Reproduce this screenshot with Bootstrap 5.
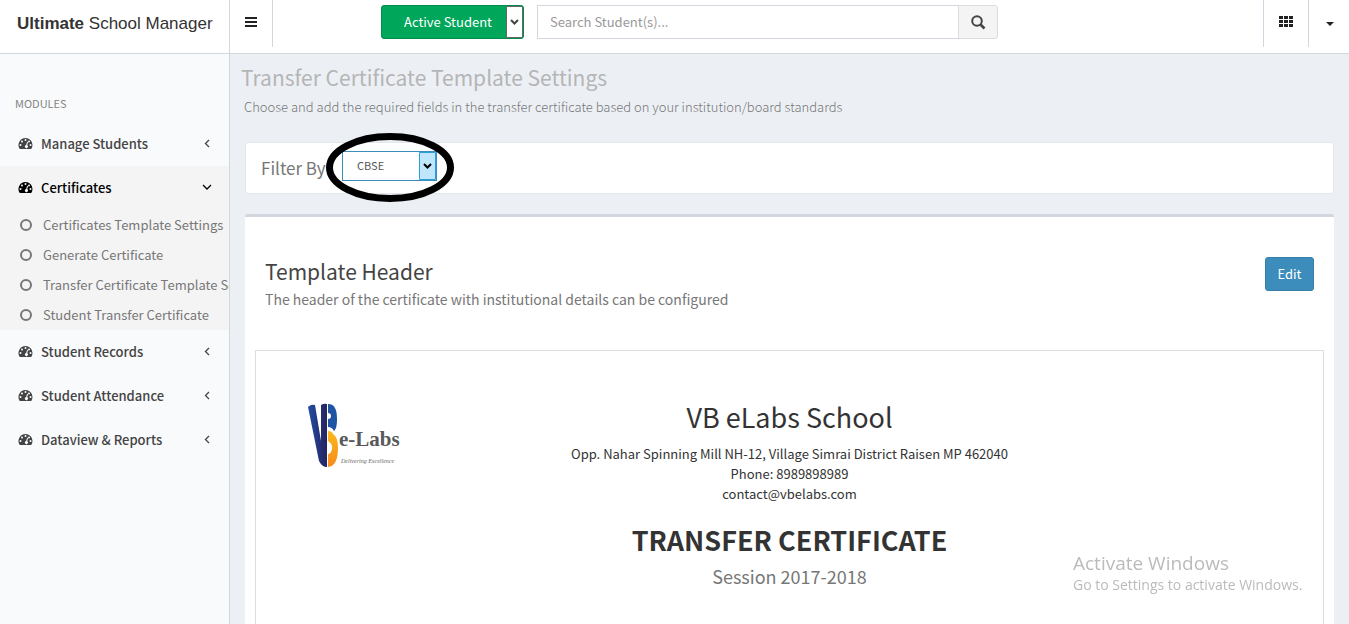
<!DOCTYPE html>
<html lang="en">
<head>
<meta charset="utf-8">
<meta name="viewport" content="width=device-width, initial-scale=1">
<title>Ultimate School Manager</title>
<link rel="stylesheet" href="https://cdn.jsdelivr.net/npm/bootstrap@5.3.0/dist/css/bootstrap.min.css">
<style>
  body { font-family: "Noto Sans CJK SC", sans-serif; font-size: 13px; line-height: 20px; color: #333; background: #ecf0f5; }
  a { text-decoration: none; color: inherit; }
  .topbar { height: 54px; border-bottom: 1px solid #d2d6de; background: #fff; }
  .brand { width: 230px; height: 53px; line-height: 48px; font-family: "Liberation Sans", sans-serif; font-size: 17px; color: #333; border-right: 1px solid #d2d6de; padding-left: 17px; white-space: nowrap; }
  .bar-btn { height: 47px; border: 0; background: none; padding: 0 0 6px; color: #333; }
  .bar-menu { width: 43px; border-right: 1px solid #d2d6de; }
  .bar-grid { width: 46px; border-left: 1px solid #d2d6de; border-right: 1px solid #d2d6de; }
  .bar-user { width: 40px; padding: 0 0 2px 2px; }
  .finder { margin-left: 108px; padding-top: 5px; gap: 13px; }
  .finder select { width: 143px; height: 34px; appearance: none; border: 1px solid #008d4c; border-radius: 3px; color: #fff; padding: 0 22px;
    background: #00a65a url("data:image/svg+xml,%3Csvg xmlns='http://www.w3.org/2000/svg' width='17' height='32'%3E%3Cpath d='M.5.5h16v31H.5z' fill='%23fff' stroke='%23666'/%3E%3Cpath d='M5 14l3.500 3.500L12 14' fill='none' stroke='%23444' stroke-width='2'/%3E%3C/svg%3E") right center no-repeat; }
  .finder .input-group { width: 461px; }
  .finder .form-control { height: 34px; font-size: 13px; line-height: 20px; border-color: #d2d6de; border-radius: 0; padding: 5px 12px 7px; }
  .finder .form-control::placeholder { color: #999; }
  .finder .btn { width: 40px; height: 34px; padding: 0 0 4px; background: #f4f4f4; border-color: #ddd; border-radius: 0 3px 3px 0; }
  .sidebar { width: 230px; flex: none; background: #f9fafc; border-right: 1px solid #d2d6de; overflow: hidden; min-height: calc(100vh - 54px); }
  .side-title { padding: 39px 15px 9px; font-size: 11px; color: #848484; }
  .side-link { height: 44px; padding: 0 17px 0 18px; color: #444; font-weight: 500; }
  .side-link .arrow { margin-left: auto; }
  .side-open { background: #f4f4f5; }
  .side-open > .side-link { color: #000; }
  .sub-link { height: 30px; padding-left: 20px; gap: 11px; color: #777; white-space: nowrap; }
  .page-body { min-width: 0; padding: 10px 15px 0; }
  .page-title { font-size: 21px; line-height: 26px; color: #b5b5b5; margin: 0 0 7px -4px; font-weight: 400; }
  .page-lead { color: #777; font-weight: 300; margin: 0 0 25px -1px; }
  .filter-box { height: 52px; background: #fff; border: 1px solid #e3e6ea; border-radius: 3px; padding: 0 15px; margin-bottom: 20px; }
  .filter-box label { font-size: 17px; color: #777; width: 81px; white-space: nowrap; }
  .board-select { width: 95px; height: 30px; appearance: none; border: 1px solid #3c8dbc; border-radius: 0; font-size: 11px; color: #555; padding: 0 14px 2px; display: block;
    background: #fff url("data:image/svg+xml,%3Csvg xmlns='http://www.w3.org/2000/svg' width='17' height='28'%3E%3Cpath d='M.5.5h16v27H.5z' fill='%23bee6fd' stroke='%232a9fd8'/%3E%3Cpath d='M5 12l3.500 3.500L12 12' fill='none' stroke='%23000' stroke-width='2'/%3E%3C/svg%3E") right center no-repeat; }
  .pick { margin-bottom: 5px; }
  .ring { position: absolute; left: -16px; top: -18px; pointer-events: none; }
  .panel { background: #fff; border-top: 3px solid #d2d6de; border-radius: 3px; padding: 40px 10px 0; }
  .panel-head { padding: 0 10px; margin-bottom: 37px; }
  .panel-title { font-size: 21px; line-height: 28px; color: #444; font-weight: 400; margin: 0; }
  .panel-text { font-size: 14px; line-height: 28px; color: #777; margin: 0; }
  .edit-btn { height: 34px; width: 49px; padding: 0; font-size: 13px; border: 1px solid #367fa9; border-radius: 3px; background: #3c8dbc; color: #fff; }
  .edit-btn:hover { background: #367fa9; color: #fff; }
  .cert { border: 1px solid #ddd; padding: 49px 15px 0; min-height: 300px; }
  .cert .row { --bs-gutter-x: 30px; }
  .logo-cell { padding: 3px 0 0 52px; }
  .school { font-size: 27px; line-height: 34px; font-weight: 400; margin: 0 0 10px; }
  .cert-title { font-size: 27px; line-height: 34px; font-weight: 700; margin: 19px 0 6px; }
  .session { font-size: 18px; line-height: 26px; color: #777; }
  .os-note { position: fixed; right: 40px; bottom: 28px; width: 236px; font-family: "Open Sans", sans-serif; color: #bbb; font-size: 14px; line-height: 22px; white-space: nowrap; pointer-events: none; }
  .os-note strong { display: block; font-size: 19px; font-weight: 400; }
</style>
</head>
<body>
<svg width="0" height="0" class="position-absolute" aria-hidden="true">
  <symbol id="gauge" viewBox="0 0 14 12"><path fill="currentColor" fill-rule="evenodd" d="M7 0a7 7 0 0 1 7 7c0 1.500-.4 2.700-1.100 3.800-.1.100-.3.200-.4.200h-11c-.1 0-.3-.1-.4-.2A7 7 0 0 1 7 0zM3 7a1 1 0 1 0-2 0 1 1 0 0 0 2 0zm1.500-3.500a1 1 0 1 0-2 0 1 1 0 0 0 2 0zM8 2a1 1 0 1 0-2 0 1 1 0 0 0 2 0zm.700 5.300.8-3c.1-.7-.8-.9-1-.2l-.8 3a1.500 1.500 0 1 0 1 .2zM11.500 3.500a1 1 0 1 0-2 0 1 1 0 0 0 2 0zM13 7a1 1 0 1 0-2 0 1 1 0 0 0 2 0z"/></symbol>
  <symbol id="left" viewBox="0 0 10 10"><path d="M7 1 3.500 4.500 7 8" fill="none" stroke="currentColor" stroke-width="1.300"/></symbol>
  <symbol id="down" viewBox="0 0 10 10"><path d="M1 2l4 4 4-4" fill="none" stroke="currentColor" stroke-width="1.300"/></symbol>
  <symbol id="ringlet" viewBox="0 0 12 12"><circle cx="6" cy="6" r="5" fill="none" stroke="currentColor" stroke-width="2"/></symbol>
</svg>

<header class="topbar d-flex align-items-start">
  <a class="brand" href="#"><b>Ultimate</b> School Manager</a>
  <button class="bar-btn bar-menu" type="button" aria-label="Toggle menu">
    <svg width="12" height="10" viewBox="0 0 12 10"><path d="M0 1h12M0 5h12M0 9h12" stroke="#222" stroke-width="2"/></svg>
  </button>
  <form class="finder d-flex">
    <select aria-label="Student status"><option>Active Student</option></select>
    <div class="input-group">
      <input class="form-control" type="text" placeholder="Search Student(s)..." aria-label="Search students">
      <button class="btn" type="button" aria-label="Search">
        <svg width="15" height="15" viewBox="0 0 15 15" fill="none" stroke="#444"><circle cx="6" cy="6" r="4.800" stroke-width="2"/><path d="M9.500 9.500 13.500 13.500" stroke-width="2.600"/></svg>
      </button>
    </div>
  </form>
  <button class="bar-btn bar-grid ms-auto" type="button" aria-label="Apps">
    <svg width="14" height="11" viewBox="0 0 14 11" fill="#222"><path d="M0 0h4v3H0zM5 0h4v3H5zM10 0h4v3h-4zM0 4h4v3H0zM5 4h4v3H5zM10 4h4v3h-4zM0 8h4v3H0zM5 8h4v3H5zM10 8h4v3h-4z"/></svg>
  </button>
  <button class="bar-btn bar-user" type="button" aria-label="Account menu">
    <svg width="8" height="4" viewBox="0 0 8 4"><path d="M0 0h8L4 4z" fill="#222"/></svg>
  </button>
</header>

<div class="d-flex">
  <nav class="sidebar" aria-label="Modules">
    <div class="side-title">MODULES</div>
    <a class="side-link d-flex align-items-center gap-2" href="#"><svg width="15" height="12"><use href="#gauge"/></svg>Manage Students<svg class="arrow" width="10" height="10"><use href="#left"/></svg></a>
    <div class="side-open">
      <a class="side-link d-flex align-items-center gap-2" href="#"><svg width="15" height="12"><use href="#gauge"/></svg>Certificates<svg class="arrow" width="10" height="10"><use href="#down"/></svg></a>
      <a class="sub-link d-flex align-items-center" href="#"><svg class="flex-shrink-0" width="12" height="12"><use href="#ringlet"/></svg>Certificates Template Settings</a>
      <a class="sub-link d-flex align-items-center" href="#"><svg class="flex-shrink-0" width="12" height="12"><use href="#ringlet"/></svg>Generate Certificate</a>
      <a class="sub-link d-flex align-items-center" href="#"><svg class="flex-shrink-0" width="12" height="12"><use href="#ringlet"/></svg>Transfer Certificate Template Settings</a>
      <a class="sub-link d-flex align-items-center" href="#"><svg class="flex-shrink-0" width="12" height="12"><use href="#ringlet"/></svg>Student Transfer Certificate</a>
    </div>
    <a class="side-link d-flex align-items-center gap-2" href="#"><svg width="15" height="12"><use href="#gauge"/></svg>Student Records<svg class="arrow" width="10" height="10"><use href="#left"/></svg></a>
    <a class="side-link d-flex align-items-center gap-2" href="#"><svg width="15" height="12"><use href="#gauge"/></svg>Student Attendance<svg class="arrow" width="10" height="10"><use href="#left"/></svg></a>
    <a class="side-link d-flex align-items-center gap-2" href="#"><svg width="15" height="12"><use href="#gauge"/></svg>Dataview &amp; Reports<svg class="arrow" width="10" height="10"><use href="#left"/></svg></a>
  </nav>

  <main class="page-body flex-grow-1">
    <h1 class="page-title">Transfer Certificate Template Settings</h1>
    <p class="page-lead">Choose and add the required fields in the transfer certificate based on your institution/board standards</p>

    <div class="filter-box d-flex align-items-center">
      <label for="board">Filter By:</label>
      <div class="pick position-relative">
        <select class="board-select" id="board"><option>CBSE</option></select>
        <svg class="ring" width="128" height="69" viewBox="0 0 128 69"><ellipse cx="64" cy="34.500" rx="60.500" ry="31" fill="none" stroke="#000" stroke-width="7"/></svg>
      </div>
    </div>

    <section class="panel">
      <div class="panel-head d-flex justify-content-between align-items-start">
        <div>
          <h2 class="panel-title">Template Header</h2>
          <p class="panel-text">The header of the certificate with institutional details can be configured</p>
        </div>
        <button class="edit-btn btn" type="button">Edit</button>
      </div>
      <div class="cert">
        <div class="row">
          <div class="col-2 p-0">
            <div class="logo-cell">
              <svg width="92" height="66" viewBox="0 0 92 66" overflow="visible" role="img" aria-label="VB e-Labs, Delivering Excellence">
                <defs>
                  <linearGradient id="blue" x1="0" x2="1"><stop offset="0" stop-color="#2350a0"/><stop offset=".6" stop-color="#23327c"/><stop offset="1" stop-color="#27235c"/></linearGradient>
                  <linearGradient id="gold" x1="0" x2="0" y1="0" y2="1"><stop offset="0" stop-color="#fbb81c"/><stop offset="1" stop-color="#f68b1f"/></linearGradient>
                </defs>
                <path d="M0 4Q3 1 7 2L13 38V2Q16 0 19 1V64Q14 64 11 58z" fill="url(#blue)"/>
                <path d="M20 1C27 1 29 7 29 16 29 23 28 26 26 28Q24 24 20 24V16Q23 16 23 13T20 10z" fill="#1f55a5"/>
                <path d="M20 28Q24 28 25 31 30 34 30 45 30 63 20 64V51Q23 51 24 46T20 38z" fill="url(#gold)"/>
                <text x="31" y="43" font-family="Liberation Serif, serif" font-weight="700" font-size="21" fill="#58595b">e-Labs</text>
                <text x="33" y="60" font-family="Liberation Serif, serif" font-style="italic" font-size="6" fill="#666">Delivering Excellence</text>
              </svg>
            </div>
          </div>
          <div class="col-8 text-center">
            <h3 class="school">VB eLabs School</h3>
            <div>Opp. Nahar Spinning Mill NH-12, Village Simrai District Raisen MP 462040</div>
            <div>Phone: 8989898989</div>
            <div>contact@vbelabs.com</div>
            <h3 class="cert-title">TRANSFER CERTIFICATE</h3>
            <div class="session">Session 2017-2018</div>
          </div>
        </div>
      </div>
    </section>
  </main>
</div>
<div class="os-note"><strong>Activate Windows</strong>Go to Settings to activate Windows.</div>
<script src="https://cdn.jsdelivr.net/npm/bootstrap@5.3.0/dist/js/bootstrap.bundle.min.js"></script>
</body>
</html>
